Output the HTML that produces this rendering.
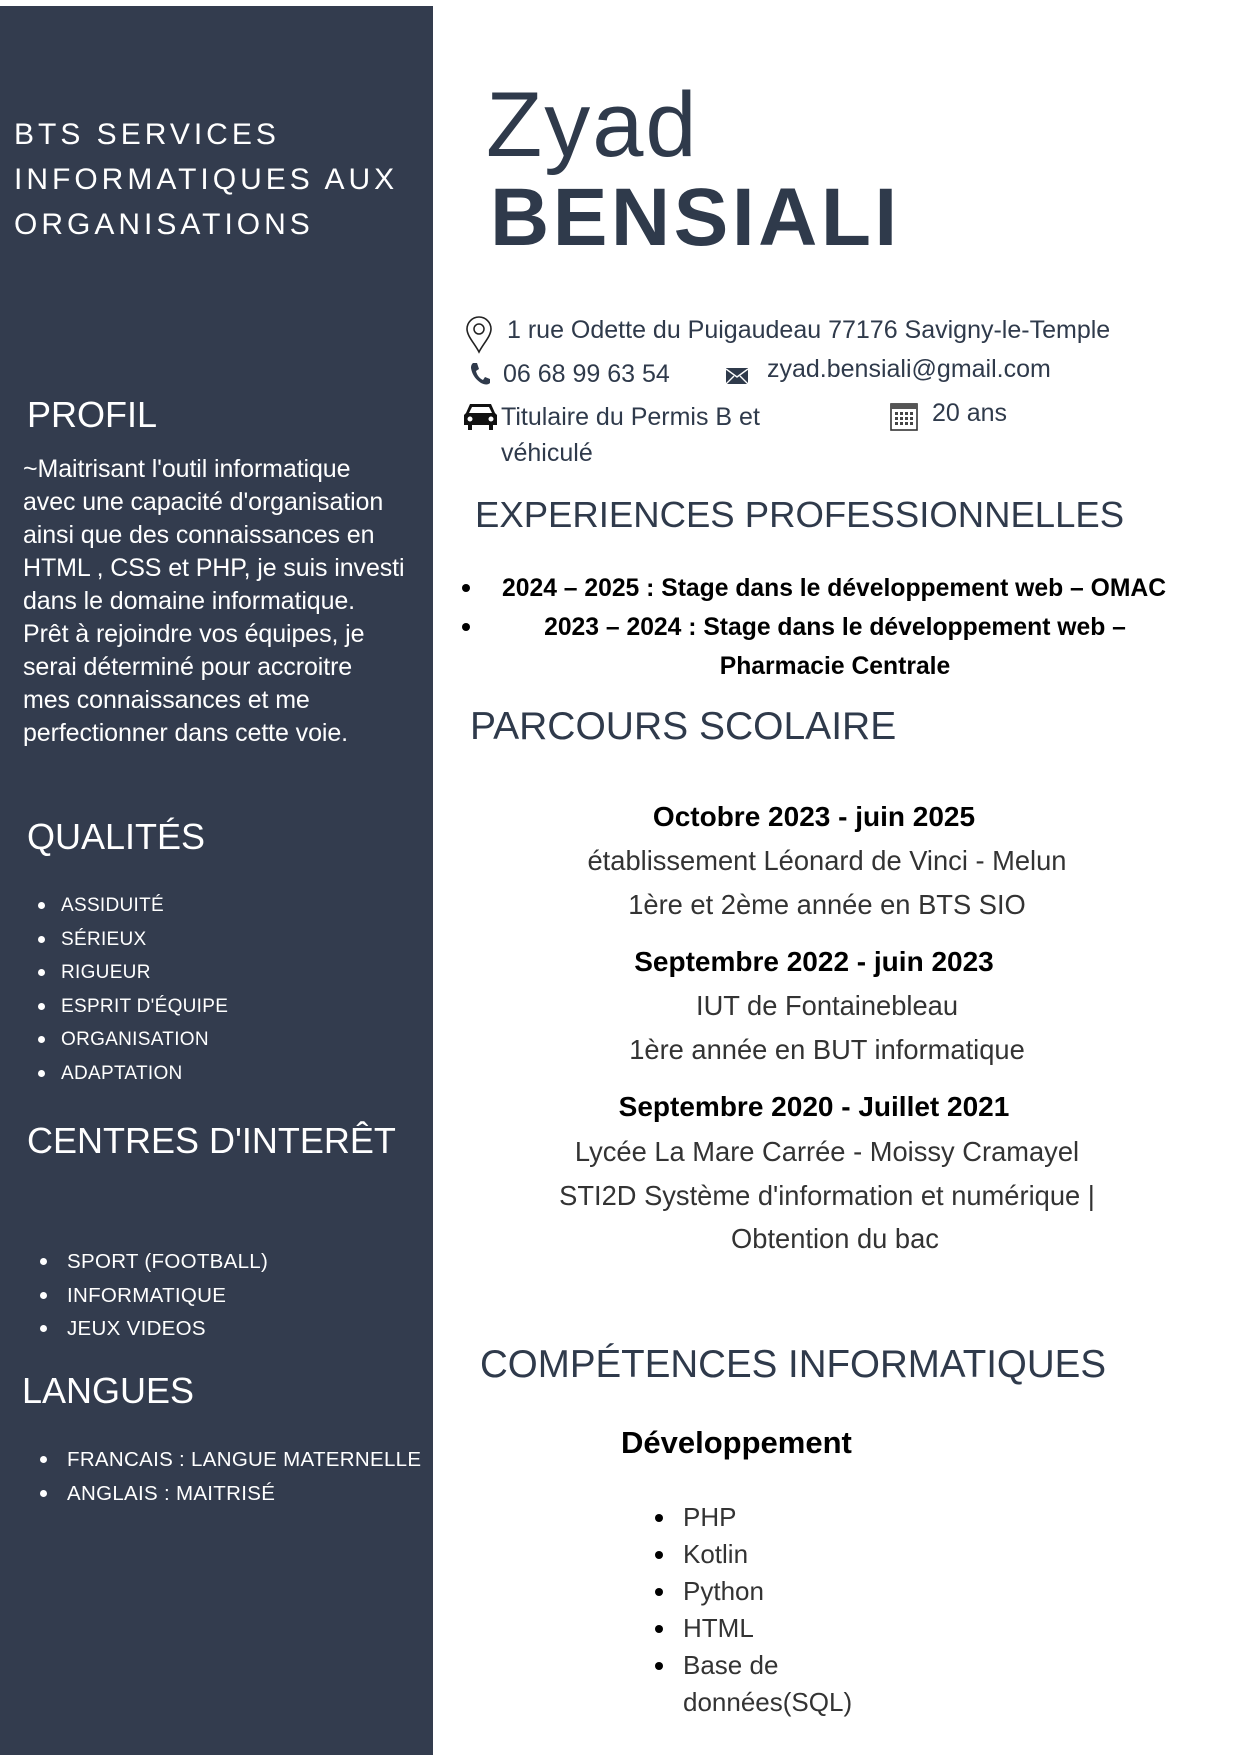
<!DOCTYPE html>
<html><head><meta charset="utf-8"><style>
*{margin:0;padding:0;box-sizing:border-box}
body{width:1241px;height:1755px;background:#fff;position:relative;overflow:hidden;font-family:"Liberation Sans",sans-serif;color:#2f3a4b}
.sb{position:absolute;left:0;top:6px;width:433px;height:1749px;background:#333c4e}
.a{position:absolute;white-space:nowrap}
.bts{left:14px;font-size:30px;letter-spacing:4px;line-height:45px;color:#fff;top:112px}
.sh{font-size:36px;color:#fff;line-height:50px}
.pt{left:23px;top:453px;font-size:25px;line-height:33px;color:#fff;letter-spacing:-0.1px}
.li{font-size:19px;color:#fff;line-height:33.5px;letter-spacing:0.3px}
.li div{position:relative;padding-left:23px}
.li div:before{content:"";position:absolute;left:0;top:13px;width:7px;height:7px;border-radius:50%;background:#fff}
.li2{font-size:20.5px}
.li2 div{padding-left:27px}
.ct{font-size:25px;line-height:30px;color:#2f3a4b}
.h2{line-height:50px;color:#2f3a4b}
.ex{font-size:24.7px;font-weight:bold;color:#000;line-height:39px}
.sc{position:absolute;left:477px;width:700px;text-align:center;font-size:27.3px;line-height:36px;color:#333}
.sc b{color:#000;font-size:28px;position:relative;left:-13px}
.sk{font-size:26px;line-height:37px;color:#333;top:1499px}
.sk div{position:relative;padding-left:28px}
.sk div:before{content:"";position:absolute;left:0;top:15px;width:8px;height:8px;border-radius:50%;background:#000}
</style></head><body>
<div class="sb"></div>
<div class="a bts">BTS SERVICES<br>INFORMATIQUES AUX<br>ORGANISATIONS</div>
<div class="a sh" style="left:27px;top:390px">PROFIL</div>
<div class="a pt">~Maitrisant l'outil informatique<br>avec une capacité d'organisation<br>ainsi que des connaissances en<br>HTML , CSS et PHP, je suis investi<br>dans le domaine informatique.<br>Prêt à rejoindre vos équipes, je<br>serai déterminé pour accroitre<br>mes connaissances et me<br>perfectionner dans cette voie.</div>
<div class="a sh" style="left:27px;top:812px">QUALITÉS</div>
<div class="a li" style="left:38px;top:889px"><div>ASSIDUITÉ</div><div>SÉRIEUX</div><div>RIGUEUR</div><div>ESPRIT D'ÉQUIPE</div><div>ORGANISATION</div><div>ADAPTATION</div></div>
<div class="a sh" style="left:27px;top:1116px">CENTRES D'INTERÊT</div>
<div class="a li li2" style="left:40px;top:1245px"><div>SPORT (FOOTBALL)</div><div>INFORMATIQUE</div><div>JEUX VIDEOS</div></div>
<div class="a sh" style="left:22px;top:1366px">LANGUES</div>
<div class="a li li2" style="left:40px;top:1443px"><div>FRANCAIS : LANGUE MATERNELLE</div><div>ANGLAIS : MAITRISÉ</div></div>

<div class="a" style="left:486px;top:70px;font-size:92px;line-height:110px;font-weight:300;letter-spacing:2px;color:#2f3a4b">Zyad</div>
<div class="a" style="left:490px;top:168px;font-size:82px;line-height:100px;font-weight:bold;letter-spacing:3.5px;color:#2f3a4b">BENSIALI</div>

<svg class="a" style="left:465px;top:316px" width="28" height="38" viewBox="0 0 28 38"><path d="M14 36 C10 28 2 20 2 13 A12 12 0 0 1 26 13 C26 20 18 28 14 36Z" fill="none" stroke="#222" stroke-width="1.6"/><circle cx="14" cy="13" r="5" fill="none" stroke="#222" stroke-width="1.5"/></svg>
<div class="a ct" style="left:507px;top:315px">1 rue Odette du Puigaudeau 77176 Savigny-le-Temple</div>
<svg class="a" style="left:469px;top:362px" width="22" height="24" viewBox="0 0 22 24"><path d="M4 1 L8 1 L10 7 L7 9 C8 13 10 16 14 18 L16 15 L21 17 L21 21 C19 23 16 23 12 21 C6 17 3 12 2 6 C2 3 3 2 4 1Z" fill="#2f3a4b"/></svg>
<div class="a ct" style="left:503px;top:359px">06 68 99 63 54</div>
<svg class="a" style="left:726px;top:368px" width="22" height="16" viewBox="0 0 22 16"><rect x="0" y="0" width="22" height="16" fill="#2f3a4b"/><path d="M0 1 L11 9 L22 1 M0 16 L8 8 M22 16 L14 8" stroke="#fff" stroke-width="1.4" fill="none"/></svg>
<div class="a ct" style="left:767px;top:354px">zyad.bensiali@gmail.com</div>
<svg class="a" style="left:463px;top:401px" width="35" height="30" viewBox="0 0 35 30"><path d="M7 3 L28 3 L32 12 L34 14 L34 24 L30 24 L30 29 L26 29 L26 24 L9 24 L9 29 L5 29 L5 24 L1 24 L1 14 L3 12Z" fill="#111"/><path d="M9 6 L26 6 L29 12 L6 12Z" fill="#fff"/><circle cx="7" cy="18" r="2.5" fill="#fff"/><circle cx="28" cy="18" r="2.5" fill="#fff"/></svg>
<div class="a ct" style="left:501px;top:399px;line-height:36px">Titulaire du Permis B et<br>véhiculé</div>
<svg class="a" style="left:890px;top:401px" width="28" height="30" viewBox="0 0 28 30"><rect x="1" y="3" width="26" height="26" fill="#fff" stroke="#333" stroke-width="1.6"/><rect x="1" y="3" width="26" height="5" fill="#555"/><g fill="#444"><rect x="5" y="11" width="3" height="3"/><rect x="10" y="11" width="3" height="3"/><rect x="15" y="11" width="3" height="3"/><rect x="20" y="11" width="3" height="3"/><rect x="5" y="16" width="3" height="3"/><rect x="10" y="16" width="3" height="3"/><rect x="15" y="16" width="3" height="3"/><rect x="20" y="16" width="3" height="3"/><rect x="5" y="21" width="3" height="3"/><rect x="10" y="21" width="3" height="3"/><rect x="15" y="21" width="3" height="3"/><rect x="20" y="21" width="3" height="3"/></g></svg>
<div class="a ct" style="left:932px;top:398px">20 ans</div>

<div class="a h2" style="left:475px;top:490px;font-size:36.5px">EXPERIENCES PROFESSIONNELLES</div>
<div class="a" style="left:462px;top:584px;width:8px;height:8px;border-radius:50%;background:#000"></div>
<div class="a ex" style="left:502px;top:569px">2024 – 2025 : Stage dans le développement web – OMAC</div>
<div class="a" style="left:462px;top:623px;width:8px;height:8px;border-radius:50%;background:#000"></div>
<div class="a ex" style="left:490px;top:608px;width:690px;text-align:center;white-space:normal">2023 – 2024 : Stage dans le développement web –<br>Pharmacie Centrale</div>

<div class="a h2" style="left:470px;top:702px;font-size:39px">PARCOURS SCOLAIRE</div>
<div class="sc" style="top:799px"><b>Octobre 2023 - juin 2025</b></div>
<div class="sc" style="top:843px">établissement Léonard de Vinci - Melun</div>
<div class="sc" style="top:887px">1ère et 2ème année en BTS SIO</div>
<div class="sc" style="top:944px"><b>Septembre 2022 - juin 2023</b></div>
<div class="sc" style="top:988px">IUT de Fontainebleau</div>
<div class="sc" style="top:1032px">1ère année en BUT informatique</div>
<div class="sc" style="top:1089px"><b>Septembre 2020 - Juillet 2021</b></div>
<div class="sc" style="top:1134px">Lycée La Mare Carrée - Moissy Cramayel</div>
<div class="sc" style="top:1178px">STI2D Système d'information et numérique |</div>
<div class="sc" style="top:1221px;left:485px">Obtention du bac</div>

<div class="a h2" style="left:480px;top:1340px;font-size:38.5px">COMPÉTENCES INFORMATIQUES</div>
<div class="a" style="left:621px;top:1424px;font-size:31px;line-height:38px;font-weight:bold;color:#000">Développement</div>
<div class="a sk" style="left:655px"><div>PHP</div><div>Kotlin</div><div>Python</div><div>HTML</div><div>Base de<br>données(SQL)</div></div>
</body></html>
